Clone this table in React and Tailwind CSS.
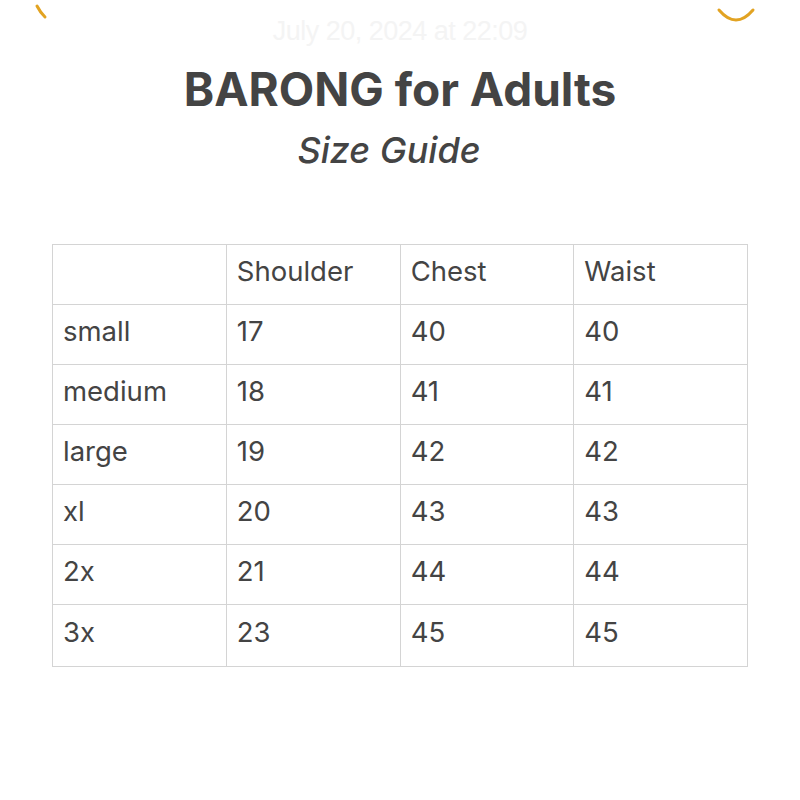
const rows = [
  ["small", "17", "40", "40"],
  ["medium", "18", "41", "41"],
  ["large", "19", "42", "42"],
  ["xl", "20", "43", "43"],
  ["2x", "21", "44", "44"],
  ["3x", "23", "45", "45"],
];

export default function App() {
  return (
    <div className="relative w-[800px] h-[800px] bg-white overflow-hidden" style={{ fontFamily: "Inter, 'Liberation Sans', sans-serif" }}>
      {/* faint status bar remnants */}
      <svg className="absolute left-[34px] top-0" width="14" height="20" viewBox="0 0 14 20">
        <path d="M3 6 Q6 12 11 17" stroke="#e2a322" strokeWidth="3" fill="none" strokeLinecap="round" />
      </svg>
      <svg className="absolute left-[714px] top-0" width="44" height="24" viewBox="0 0 44 24">
        <path d="M5 10 Q22 30 39 10" stroke="#e2a322" strokeWidth="3" fill="none" strokeLinecap="round" />
      </svg>
      <div className="absolute top-[11px] left-0 w-full text-center text-[27px] text-[#f4f4f4] tracking-[-0.5px]" style={{ fontFamily: "'Liberation Sans', sans-serif" }}>
        July 20, 2024 at 22:09
      </div>

      <div className="flex flex-col items-center pt-[59px]">
        <h1 className="text-[46px] font-bold text-[#444444] leading-[60px]">BARONG for Adults</h1>
        <h2 className="text-[36px] italic font-medium text-[#444444] leading-[48px] mt-[7px] mr-[22px]">Size Guide</h2>
      </div>

      <div className="px-[52px] pt-[70px]">
        <table className="w-[696px] border-collapse text-[27.5px] text-[#444444]">
          <tbody>
            <tr className="h-[60px]">
              {["", "Shoulder", "Chest", "Waist"].map((h, i) => (
                <td key={i} className="border border-[#d4d4d4] w-[174px] pl-[10px] pr-[10px] pb-[5px] align-middle">{h}</td>
              ))}
            </tr>
            {rows.map((r, ri) => (
              <tr key={ri} className={ri === rows.length - 1 ? "h-[62px]" : "h-[60px]"}>
                {r.map((c, ci) => (
                  <td key={ci} className="border border-[#d4d4d4] pl-[10px] pr-[10px] pb-[5px] align-middle">{c}</td>
                ))}
              </tr>
            ))}
          </tbody>
        </table>
      </div>
    </div>
  );
}
